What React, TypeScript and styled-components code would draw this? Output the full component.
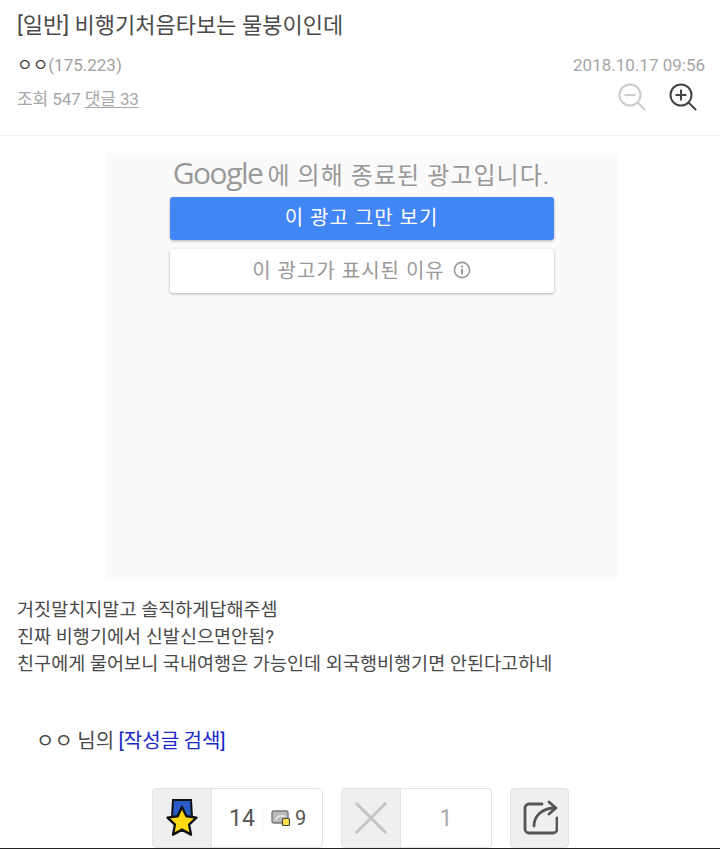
import React from "react";
import styled, { createGlobalStyle } from "styled-components";

const Global = createGlobalStyle`
  html, body { margin: 0; padding: 0; background: #fff; }
  * { box-sizing: border-box; }
  body { font-family: Roboto, "Noto Sans CJK KR", sans-serif; }
`;
const Page = styled.div`
  width: 720px; height: 849px; overflow: hidden; position: relative; background: #fff;
  display: flex; flex-direction: column;
`;
const Header = styled.header`
  height: 136px; padding: 11px 15px 0 17px; border-bottom: 1px solid #efefef; flex: none;
`;
const Title = styled.h1`
  margin: 0; font-size: 22px; line-height: 29px; font-weight: 400; color: #4a4a4a;
`;
const MetaRow = styled.div`
  display: flex; justify-content: space-between; align-items: center; margin-top: 15px; height: 20px;
`;
const Author = styled.span`font-size: 17px; color: #444; line-height: 20px;`;
const Ip = styled.span`color: #a0a0a0;`;
const DateText = styled.span`font-size: 17px; color: #a6a6a6;`;
const StatsRow = styled.div`
  display: flex; justify-content: space-between; align-items: center; margin-top: 8px; height: 28px;
`;
const Stats = styled.div`font-size: 17px; color: #a6a6a6; letter-spacing: -0.1px;`;
const Underlined = styled.span`text-decoration: underline; text-underline-offset: 2px;`;
const ZoomGroup = styled.div`display: flex; gap: 23px; margin-right: 8px;`;
const AdWrap = styled.div`
  margin: 17px 0 0 106px; width: 511px; height: 426px; background: #fafafa; flex: none;
  display: flex; flex-direction: column; align-items: center; padding-top: 3px;
`;
const AdTitle = styled.div`
  display: flex; align-items: baseline; gap: 5px; height: 41px; color: #999; font-size: 24px; line-height: 33px;
  letter-spacing: 1.05px;
`;
const GoogleWord = styled.span`
  font-family: "Open Sans", sans-serif; font-size: 30px; font-weight: 500; letter-spacing: -1.5px; color: #999;
`;
const AdButton = styled.div<{ $primary?: boolean }>`
  width: 384px; border-radius: 3px; display: flex; align-items: center; justify-content: center; gap: 8px;
  height: ${(p) => (p.$primary ? 43 : 44)}px; margin-bottom: ${(p) => (p.$primary ? 9 : 0)}px;
  padding-bottom: ${(p) => (p.$primary ? 5 : 3)}px;
  background: ${(p) => (p.$primary ? "#4285f4" : "#fff")};
  color: ${(p) => (p.$primary ? "#fff" : "#999")};
  font-size: 20px; letter-spacing: 1px;
  box-shadow: 0 1px 3px rgba(0,0,0,.3);
`;
const Body = styled.div`
  margin: 18px 0 0 17px; font-size: 18.5px; line-height: 27px; color: #4a4a4a; letter-spacing: 0.05px;
`;
const SearchLine = styled.div`
  margin: 49px 0 0 36px; font-size: 20px; line-height: 28px; color: #4a4a4a; word-spacing: -0.5px;
`;
const SearchLink = styled.span`color: #1a2ac8;`;
const Actions = styled.div`
  position: absolute; left: 152px; top: 788px; display: flex; gap: 18px;
`;
const VoteBox = styled.div<{ $w: number }>`
  width: ${(p) => p.$w}px; height: 60px; border: 1px solid #e3e3e3; border-radius: 4px; background: #fff;
  display: flex; overflow: hidden;
`;
const IconCell = styled.div`
  width: 59px; background: #efefef; border-right: 1px solid #e3e3e3; display: flex; align-items: center; justify-content: center; flex: none;
`;
const Count = styled.div<{ $muted?: boolean }>`
  flex: 1; display: flex; align-items: center; justify-content: center; font-size: 23px; color: ${(p) => (p.$muted ? "#aaa" : "#444")};
`;
const Number14 = styled.span`font-size: 23px; color: #555; margin-left: 17px; width: 33px;`;
const Sep = styled.span`width: 1px; height: 26px; background: #f3f3f3; margin: 0 8px 0 0;`;
const Nine = styled.span`font-size: 20px; color: #555; margin-left: 4px;`;
const ScoreCell = styled.div`flex: 1; display: flex; align-items: center;`;
const ShareBtn = styled.div`
  width: 59px; height: 60px; background: #efefef; border: 1px solid #e3e3e3; border-radius: 4px;
  display: flex; align-items: center; justify-content: center;
`;
const BottomLine = styled.div`position: absolute; left: 0; right: 0; top: 848px; height: 1px; background: #222;`;

const Mag = ({ plus }: { plus?: boolean }) => {
  const c = plus ? "#444" : "#ccc";
  return (
    <svg width="28" height="28" viewBox="0 0 28 28" fill="none" stroke={c} strokeWidth="2">
      <circle cx="12" cy="12" r="10.5" />
      <path d="M6.5 12h11" />
      {plus && <path d="M12 6.5v11" />}
      <path d="M19.5 19.5l7 7" strokeLinecap="round" />
    </svg>
  );
};
const Star = () => (
  <svg width="36" height="38" viewBox="0 0 36 38">
    <path d="M9 1h18l1 17H8z" fill="#2a5bc4" stroke="#111" strokeWidth="2" />
    <path d="M18 8l4.4 9.3 10.1 1.3-7.4 7 1.9 10-9-5-9 5 1.9-10-7.4-7 10.1-1.3z" fill="#ffd912" stroke="#111" strokeWidth="2.4" strokeLinejoin="round" />
  </svg>
);
const Cross = () => (
  <svg width="34" height="34" viewBox="0 0 34 34" stroke="#c4c4c4" strokeWidth="3"><path d="M2 2l30 30M32 2L2 32" /></svg>
);
const Share = () => (
  <svg width="36" height="36" viewBox="0 0 36 36" fill="none" stroke="#555" strokeWidth="2.8" strokeLinecap="round" strokeLinejoin="round">
    <path d="M20 4H7a4 4 0 0 0-4 4v21a4 4 0 0 0 4 4h24a4 4 0 0 0 4-4V18" />
    <path d="M12 26c0-10 8-18 21-18" />
    <path d="M27 2l7 6-7 6" />
  </svg>
);
const ImgIcon = () => (
  <svg width="20" height="18" viewBox="0 0 20 18">
    <rect x="1" y="2" width="16" height="12" rx="2" fill="#bbb" stroke="#777" strokeWidth="1.4" />
    <path d="M4 11l4-4h6" fill="none" stroke="#eee" strokeWidth="1.4" />
    <rect x="11.5" y="9.5" width="7" height="7" rx="1" fill="#ffe14a" stroke="#444" strokeWidth="1.2" />
  </svg>
);
const Info = () => (
  <svg width="18" height="18" viewBox="0 0 17 17" fill="none" stroke="#999" strokeWidth="1.5">
    <circle cx="8.5" cy="8.5" r="7.2" />
    <path d="M8.5 7.5v5M8.5 4.5v1.6" strokeWidth="2" />
  </svg>
);

export default function App() {
  return (
    <Page>
      <Global />
      <Header>
        <Title>[일반] 비행기처음타보는 물붕이인데</Title>
        <MetaRow>
          <Author>ㅇㅇ<Ip>(175.223)</Ip></Author>
          <DateText>2018.10.17 09:56</DateText>
        </MetaRow>
        <StatsRow>
          <Stats>조회 547 <Underlined>댓글 33</Underlined></Stats>
          <ZoomGroup><Mag /><Mag plus /></ZoomGroup>
        </StatsRow>
      </Header>
      <AdWrap>
        <AdTitle><GoogleWord>Google</GoogleWord>에 의해 종료된 광고입니다.</AdTitle>
        <AdButton $primary>이 광고 그만 보기</AdButton>
        <AdButton>이 광고가 표시된 이유 <Info /></AdButton>
      </AdWrap>
      <Body>
        거짓말치지말고 솔직하게답해주셈<br />
        진짜 비행기에서 신발신으면안됨?<br />
        친구에게 물어보니 국내여행은 가능인데 외국행비행기면 안된다고하네
      </Body>
      <SearchLine>ㅇㅇ 님의 <SearchLink>[작성글 검색]</SearchLink></SearchLine>
      <Actions>
        <VoteBox $w={171}>
          <IconCell><Star /></IconCell>
          <ScoreCell><Number14>14</Number14><Sep /><ImgIcon /><Nine>9</Nine></ScoreCell>
        </VoteBox>
        <VoteBox $w={151}>
          <IconCell><Cross /></IconCell>
          <Count $muted>1</Count>
        </VoteBox>
        <ShareBtn><Share /></ShareBtn>
      </Actions>
      <BottomLine />
    </Page>
  );
}
